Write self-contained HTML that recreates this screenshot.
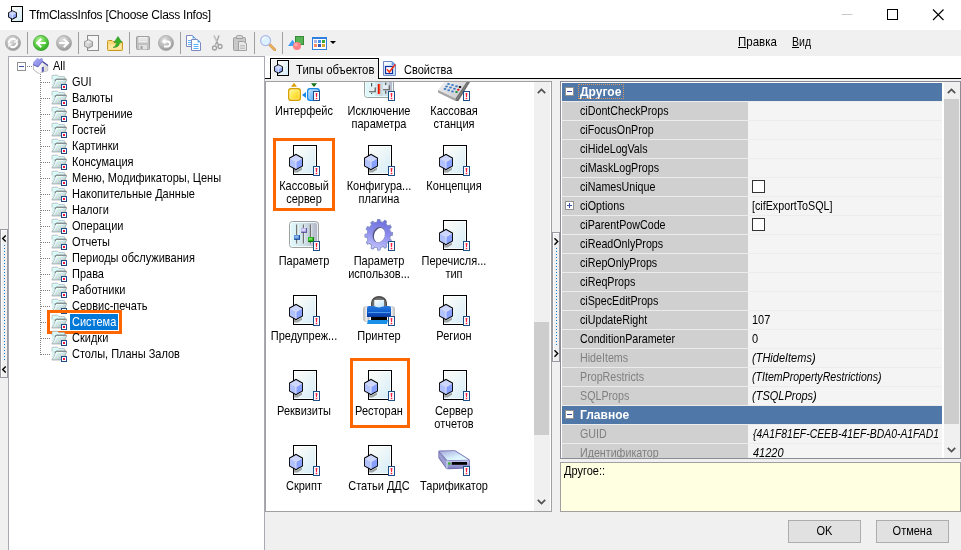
<!DOCTYPE html>
<html><head><meta charset="utf-8"><title>TfmClassInfos</title>
<style>
*{box-sizing:border-box;margin:0;padding:0}
html,body{width:961px;height:550px;overflow:hidden;background:#f0f0f0}
body{position:relative;font-family:"Liberation Sans",sans-serif;font-size:13px;color:#000;line-height:13px}
.a{position:absolute}
.t{position:absolute;white-space:nowrap;transform-origin:0 50%;transform:scaleX(.846)}
#title{left:0;top:0;width:961px;height:30px;background:#fff}
#tb{left:0;top:30px;width:961px;height:26px;background:#f0f0f0}
.sep{position:absolute;top:32px;width:1px;height:22px;background:#a0a0a0}
#tree{left:8px;top:56px;width:257px;height:496px;background:#fff;border:1px solid #aaaab2}
.tr{position:absolute;left:72px;height:13px;line-height:13px;white-space:nowrap;transform-origin:0 50%;transform:scaleX(.846)}
.vd{position:absolute;width:1px;background-image:linear-gradient(#808080 50%,transparent 50%);background-size:1px 2px}
.hd{position:absolute;height:1px;background-image:linear-gradient(90deg,#808080 50%,transparent 50%);background-size:2px 1px}
#tabs{left:265px;top:56px;width:696px;height:23px;background:#fff}
#list{left:265px;top:81px;width:287px;height:431px;background:#fff;border:1px solid #a0a0a0;overflow:hidden}
.li{position:absolute;width:90px;text-align:center;line-height:13px;white-space:nowrap;transform:scaleX(.846)}
.sel{position:absolute;border:3px solid #ff6600}
#pg{left:560px;top:81px;width:401px;height:378px;background:#ececec;border:1px solid #8c8c94;box-shadow:inset 1px 1px 0 #fff;overflow:hidden}
.ph{position:absolute;left:1px;width:380px;height:18px;background:#4f78a8;color:#fff;font-weight:bold}
.ph .pt{transform:scaleX(.925)}
.pn .pt{transform:scaleX(.822)}
.pn{position:absolute;left:1px;width:186px;height:18px;background:#d0d0d0}
.pv{position:absolute;left:187px;width:194px;height:18px;background:#f4f4f4}
.pt{position:absolute;top:2px;white-space:nowrap;line-height:13px;transform-origin:0 50%;transform:scaleX(.846)}
.cb{position:absolute;left:4px;top:2px;width:13px;height:13px;border:1px solid #333;background:#fff}
#desc{left:560px;top:462px;width:401px;height:50px;background:#ffffe1;border:1px solid #a0a0a0}
.btn{position:absolute;top:520px;width:73px;height:23px;background:#e1e1e1;border:1px solid #adadad;text-align:center;line-height:19px}
.btn span{display:inline-block;transform:scaleX(.846)}
#root{position:absolute;left:0;top:0;width:961px;height:550px;will-change:transform}
</style></head><body><div id="root">

<div id="title" class="a">
<svg class="a" style="left:8px;top:6px" width="16" height="16" viewBox="0 0 16 16"><use href="#i-doc16"/></svg>
<div class="t" style="left:29px;top:8px;font-size:12px;line-height:15px;letter-spacing:-0.26px;transform:none">TfmClassInfos [Choose Class Infos]</div>
<svg class="a" style="left:830px;top:0" width="131" height="30" viewBox="0 0 131 30"><path d="M11.5 14.5h11" stroke="#c8c8c8" stroke-width="1"/><rect x="57.5" y="9.5" width="10" height="10" fill="none" stroke="#000" stroke-width="1"/><path d="M103 9.500l10.500 10.500M113.500 9.500l-10.500 10.500" stroke="#000" stroke-width="1.100" fill="none"/></svg>
</div>
<div id="tb" class="a"></div>
<div class="sep" style="left:27px"></div>
<div class="sep" style="left:78px"></div>
<div class="sep" style="left:129px"></div>
<div class="sep" style="left:180px"></div>
<div class="sep" style="left:254px"></div>
<div class="sep" style="left:282px"></div>
<svg class="a" style="left:5px;top:35px" width="16" height="16" viewBox="0 0 16 16"><use href="#t-refresh"/></svg>
<svg class="a" style="left:33px;top:35px" width="16" height="16" viewBox="0 0 16 16"><use href="#t-back"/></svg>
<svg class="a" style="left:56px;top:35px" width="16" height="16" viewBox="0 0 16 16"><use href="#t-fwd"/></svg>
<svg class="a" style="left:84px;top:35px" width="16" height="16" viewBox="0 0 16 16"><use href="#t-docg"/></svg>
<svg class="a" style="left:107px;top:35px" width="16" height="16" viewBox="0 0 16 16"><use href="#t-folderup"/></svg>
<svg class="a" style="left:135px;top:35px" width="16" height="16" viewBox="0 0 16 16"><use href="#t-save"/></svg>
<svg class="a" style="left:158px;top:35px" width="16" height="16" viewBox="0 0 16 16"><use href="#t-undo"/></svg>
<svg class="a" style="left:186px;top:35px" width="16" height="16" viewBox="0 0 16 16"><use href="#t-copy"/></svg>
<svg class="a" style="left:209px;top:35px" width="16" height="16" viewBox="0 0 16 16"><use href="#t-cut"/></svg>
<svg class="a" style="left:232px;top:35px" width="16" height="16" viewBox="0 0 16 16"><use href="#t-paste"/></svg>
<svg class="a" style="left:260px;top:35px" width="16" height="16" viewBox="0 0 16 16"><use href="#t-search"/></svg>
<svg class="a" style="left:288px;top:35px" width="16" height="16" viewBox="0 0 16 16"><use href="#t-shapes"/></svg>
<svg class="a" style="left:311px;top:35px" width="16" height="16" viewBox="0 0 16 16"><use href="#t-grid"/></svg>
<svg class="a" style="left:330px;top:41px" width="6" height="3" viewBox="0 0 6 3"><path d="M0 0h6L3 3z" fill="#000"/></svg>
<div class="t" style="left:738px;top:35px;transform:scaleX(.885)"><u>П</u>равка</div>
<div class="t" style="left:792px;top:35px;transform:scaleX(.81)"><u>В</u>ид</div>
<div class="a" style="left:0px;top:229px;width:8px;height:149px;background:#f0f0f0;border:1px solid #9a9aa2;box-shadow:inset 1px 1px 0 #fff"></div>
<div class="a" style="left:4px;top:245px;width:1px;height:115px;background-image:linear-gradient(#0a7ad8 1px,transparent 1px);background-size:1px 3px"></div>
<svg class="a" style="left:1px;top:235px" width="6" height="8" viewBox="0 0 6 8"><path d="M4.700 .5L1.700 3.500 4.700 6.500" fill="none" stroke="#000" stroke-width="1.400"/></svg>
<svg class="a" style="left:1px;top:366px" width="6" height="8" viewBox="0 0 6 8"><path d="M4.700 .5L1.700 3.500 4.700 6.500" fill="none" stroke="#000" stroke-width="1.400"/></svg>
<div id="tree" class="a">
<div class="vd" style="left:31px;top:17px;height:281px"></div>
<div class="hd" style="left:18px;top:9px;width:6px"></div>
<svg class="a" style="left:8px;top:5px" width="9" height="9" viewBox="0 0 9 9"><rect x=".5" y=".5" width="8" height="8" fill="#fff" stroke="#919191"/><path d="M2 4.500h5" stroke="#3a4fa0"/></svg>
<svg class="a" style="left:24px;top:1px" width="16" height="16" viewBox="0 0 16 16"><use href="#i-home"/></svg>
<div class="tr" style="left:44px;top:2px">All</div>
<div class="hd" style="left:32px;top:25px;width:10px"></div>
<svg class="a" style="left:42px;top:17px" width="16" height="16" viewBox="0 0 16 16"><use href="#i-folder"/></svg>
<div class="tr" style="left:63px;top:18px">GUI</div>
<div class="hd" style="left:32px;top:41px;width:10px"></div>
<svg class="a" style="left:42px;top:33px" width="16" height="16" viewBox="0 0 16 16"><use href="#i-folder"/></svg>
<div class="tr" style="left:63px;top:34px">Валюты</div>
<div class="hd" style="left:32px;top:57px;width:10px"></div>
<svg class="a" style="left:42px;top:49px" width="16" height="16" viewBox="0 0 16 16"><use href="#i-folder"/></svg>
<div class="tr" style="left:63px;top:50px">Внутрениие</div>
<div class="hd" style="left:32px;top:73px;width:10px"></div>
<svg class="a" style="left:42px;top:65px" width="16" height="16" viewBox="0 0 16 16"><use href="#i-folder"/></svg>
<div class="tr" style="left:63px;top:66px">Гостей</div>
<div class="hd" style="left:32px;top:89px;width:10px"></div>
<svg class="a" style="left:42px;top:81px" width="16" height="16" viewBox="0 0 16 16"><use href="#i-folder"/></svg>
<div class="tr" style="left:63px;top:82px">Картинки</div>
<div class="hd" style="left:32px;top:105px;width:10px"></div>
<svg class="a" style="left:42px;top:97px" width="16" height="16" viewBox="0 0 16 16"><use href="#i-folder"/></svg>
<div class="tr" style="left:63px;top:98px">Консумация</div>
<div class="hd" style="left:32px;top:121px;width:10px"></div>
<svg class="a" style="left:42px;top:113px" width="16" height="16" viewBox="0 0 16 16"><use href="#i-folder"/></svg>
<div class="tr" style="left:63px;top:114px">Меню, Модификаторы, Цены</div>
<div class="hd" style="left:32px;top:137px;width:10px"></div>
<svg class="a" style="left:42px;top:129px" width="16" height="16" viewBox="0 0 16 16"><use href="#i-folder"/></svg>
<div class="tr" style="left:63px;top:130px">Накопительные Данные</div>
<div class="hd" style="left:32px;top:153px;width:10px"></div>
<svg class="a" style="left:42px;top:145px" width="16" height="16" viewBox="0 0 16 16"><use href="#i-folder"/></svg>
<div class="tr" style="left:63px;top:146px">Налоги</div>
<div class="hd" style="left:32px;top:169px;width:10px"></div>
<svg class="a" style="left:42px;top:161px" width="16" height="16" viewBox="0 0 16 16"><use href="#i-folder"/></svg>
<div class="tr" style="left:63px;top:162px">Операции</div>
<div class="hd" style="left:32px;top:185px;width:10px"></div>
<svg class="a" style="left:42px;top:177px" width="16" height="16" viewBox="0 0 16 16"><use href="#i-folder"/></svg>
<div class="tr" style="left:63px;top:178px">Отчеты</div>
<div class="hd" style="left:32px;top:201px;width:10px"></div>
<svg class="a" style="left:42px;top:193px" width="16" height="16" viewBox="0 0 16 16"><use href="#i-folder"/></svg>
<div class="tr" style="left:63px;top:194px">Периоды обслуживания</div>
<div class="hd" style="left:32px;top:217px;width:10px"></div>
<svg class="a" style="left:42px;top:209px" width="16" height="16" viewBox="0 0 16 16"><use href="#i-folder"/></svg>
<div class="tr" style="left:63px;top:210px">Права</div>
<div class="hd" style="left:32px;top:233px;width:10px"></div>
<svg class="a" style="left:42px;top:225px" width="16" height="16" viewBox="0 0 16 16"><use href="#i-folder"/></svg>
<div class="tr" style="left:63px;top:226px">Работники</div>
<div class="hd" style="left:32px;top:249px;width:10px"></div>
<svg class="a" style="left:42px;top:241px" width="16" height="16" viewBox="0 0 16 16"><use href="#i-folder"/></svg>
<div class="tr" style="left:63px;top:242px">Сервис-печать</div>
<div class="hd" style="left:32px;top:265px;width:10px"></div>
<svg class="a" style="left:42px;top:257px" width="16" height="16" viewBox="0 0 16 16"><use href="#i-folder"/></svg>
<div class="a" style="left:61px;top:257px;width:48px;height:16px;background:#0078d7"></div>
<div class="tr" style="left:63px;top:258px;color:#fff">Система</div>
<div class="sel" style="left:38px;top:253px;width:75px;height:24px"></div>
<div class="hd" style="left:32px;top:281px;width:10px"></div>
<svg class="a" style="left:42px;top:273px" width="16" height="16" viewBox="0 0 16 16"><use href="#i-folder"/></svg>
<div class="tr" style="left:63px;top:274px">Скидки</div>
<div class="hd" style="left:32px;top:297px;width:10px"></div>
<svg class="a" style="left:42px;top:289px" width="16" height="16" viewBox="0 0 16 16"><use href="#i-folder"/></svg>
<div class="tr" style="left:63px;top:290px">Столы, Планы Залов</div>
</div>
<div id="tabs" class="a"></div>
<div class="a" style="left:265px;top:78px;width:696px;height:1px;background:#000"></div>
<div class="a" style="left:270px;top:58px;width:109px;height:21px;background:#f0f0f0;border:1px solid #000;border-bottom:none;box-shadow:inset 1px 1px 0 #fff"></div>
<svg class="a" style="left:274px;top:60px" width="16" height="16" viewBox="0 0 16 16"><use href="#i-doc16"/></svg>
<div class="t" style="left:296px;top:63px;transform:scaleX(.871)">Типы объектов</div>
<svg class="a" style="left:383px;top:61px" width="16" height="16" viewBox="0 0 16 16"><use href="#i-props"/></svg>
<div class="t" style="left:404px;top:63px">Свойства</div>
<div id="list" class="a">
<svg class="a" style="left:22px;top:-13px" width="32" height="32" viewBox="0 0 32 32"><use href="#l-iface"/></svg>
<div class="li" style="left:-7px;top:22px">Интерфейс</div>
<svg class="a" style="left:97px;top:-13px" width="32" height="32" viewBox="0 0 32 32"><use href="#l-excl"/></svg>
<div class="li" style="left:68px;top:22px">Исключение<br>параметра</div>
<svg class="a" style="left:172px;top:-13px" width="32" height="32" viewBox="0 0 32 32"><use href="#l-kassa"/></svg>
<div class="li" style="left:143px;top:22px">Кассовая<br>станция</div>
<svg class="a" style="left:22px;top:62px" width="32" height="32" viewBox="0 0 32 32"><use href="#l-doc"/></svg>
<div class="li" style="left:-7px;top:97px">Кассовый<br>сервер</div>
<svg class="a" style="left:97px;top:62px" width="32" height="32" viewBox="0 0 32 32"><use href="#l-doc"/></svg>
<div class="li" style="left:68px;top:97px">Конфигура...<br>плагина</div>
<svg class="a" style="left:172px;top:62px" width="32" height="32" viewBox="0 0 32 32"><use href="#l-doc"/></svg>
<div class="li" style="left:143px;top:97px">Концепция</div>
<svg class="a" style="left:22px;top:137px" width="32" height="32" viewBox="0 0 32 32"><use href="#l-param"/></svg>
<div class="li" style="left:-7px;top:172px">Параметр</div>
<svg class="a" style="left:97px;top:137px" width="32" height="32" viewBox="0 0 32 32"><use href="#l-gear"/></svg>
<div class="li" style="left:68px;top:172px">Параметр<br>использов...</div>
<svg class="a" style="left:172px;top:137px" width="32" height="32" viewBox="0 0 32 32"><use href="#l-doc"/></svg>
<div class="li" style="left:143px;top:172px">Перечисля...<br>тип</div>
<svg class="a" style="left:22px;top:212px" width="32" height="32" viewBox="0 0 32 32"><use href="#l-doc"/></svg>
<div class="li" style="left:-7px;top:247px">Предупреж...</div>
<svg class="a" style="left:97px;top:212px" width="32" height="32" viewBox="0 0 32 32"><use href="#l-printer"/></svg>
<div class="li" style="left:68px;top:247px">Принтер</div>
<svg class="a" style="left:172px;top:212px" width="32" height="32" viewBox="0 0 32 32"><use href="#l-doc"/></svg>
<div class="li" style="left:143px;top:247px">Регион</div>
<svg class="a" style="left:22px;top:287px" width="32" height="32" viewBox="0 0 32 32"><use href="#l-doc"/></svg>
<div class="li" style="left:-7px;top:322px">Реквизиты</div>
<svg class="a" style="left:97px;top:287px" width="32" height="32" viewBox="0 0 32 32"><use href="#l-doc"/></svg>
<div class="li" style="left:68px;top:322px">Ресторан</div>
<svg class="a" style="left:172px;top:287px" width="32" height="32" viewBox="0 0 32 32"><use href="#l-doc"/></svg>
<div class="li" style="left:143px;top:322px">Сервер<br>отчетов</div>
<svg class="a" style="left:22px;top:362px" width="32" height="32" viewBox="0 0 32 32"><use href="#l-doc"/></svg>
<div class="li" style="left:-7px;top:397px">Скрипт</div>
<svg class="a" style="left:97px;top:362px" width="32" height="32" viewBox="0 0 32 32"><use href="#l-doc"/></svg>
<div class="li" style="left:68px;top:397px">Статьи ДДС</div>
<svg class="a" style="left:172px;top:362px" width="32" height="32" viewBox="0 0 32 32"><use href="#l-drive"/></svg>
<div class="li" style="left:143px;top:397px">Тарификатор</div>
<div class="sel" style="left:7px;top:56px;width:62px;height:73px"></div>
<div class="sel" style="left:84px;top:276px;width:60px;height:70px"></div>
<div class="a" style="left:268px;top:0px;width:16px;height:429px;background:#f0f0f0"></div>
<div class="a" style="left:268px;top:240px;width:15px;height:113px;background:#cdcdcd"></div>
<svg class="a" style="left:271px;top:6px" width="9" height="6" viewBox="0 0 9 6"><path d="M.8 5.200L4.500 1.500 8.200 5.200" fill="none" stroke="#505050" stroke-width="1.700"/></svg>
<svg class="a" style="left:271px;top:417px" width="9" height="6" viewBox="0 0 9 6"><path d="M.8 .8L4.500 4.500 8.200 .8" fill="none" stroke="#505050" stroke-width="1.700"/></svg>
</div>
<div class="a" style="left:552px;top:232px;width:8px;height:130px;background:#f0f0f0;border:1px solid #9a9aa2;box-shadow:inset 1px 1px 0 #fff"></div>
<div class="a" style="left:556px;top:248px;width:1px;height:97px;background-image:linear-gradient(#0a7ad8 1px,transparent 1px);background-size:1px 3px"></div>
<svg class="a" style="left:553px;top:238px" width="6" height="8" viewBox="0 0 6 8"><path d="M1.500 .3L4.700 3.500 1.500 6.700" fill="none" stroke="#000" stroke-width="1.400"/></svg>
<svg class="a" style="left:553px;top:350px" width="6" height="8" viewBox="0 0 6 8"><path d="M1.500 .3L4.700 3.500 1.500 6.700" fill="none" stroke="#000" stroke-width="1.400"/></svg>
<div id="pg" class="a">
<div class="ph" style="top:1px"><svg class="a" style="left:3px;top:4px" width="9" height="9" viewBox="0 0 9 9"><rect x=".5" y=".5" width="8" height="8" fill="#fff" stroke="#919191"/><path d="M2 4.500h5" stroke="#3a4fa0"/></svg><div class="pt" style="left:18px">Другое</div><div class="a" style="left:16px;top:1px;width:46px;height:15px;border:1px dotted #d89860"></div></div>
<div class="pn" style="top:20px"><div class="pt" style="left:18px;color:#000">ciDontCheckProps</div></div>
<div class="pv" style="top:20px"></div>
<div class="pn" style="top:39px"><div class="pt" style="left:18px;color:#000">ciFocusOnProp</div></div>
<div class="pv" style="top:39px"></div>
<div class="pn" style="top:58px"><div class="pt" style="left:18px;color:#000">ciHideLogVals</div></div>
<div class="pv" style="top:58px"></div>
<div class="pn" style="top:77px"><div class="pt" style="left:18px;color:#000">ciMaskLogProps</div></div>
<div class="pv" style="top:77px"></div>
<div class="pn" style="top:96px"><div class="pt" style="left:18px;color:#000">ciNamesUnique</div></div>
<div class="pv" style="top:96px"><div class="cb"></div></div>
<div class="pn" style="top:115px"><svg class="a" style="left:3px;top:4px" width="9" height="9" viewBox="0 0 9 9"><rect x=".5" y=".5" width="8" height="8" fill="#fff" stroke="#919191"/><path d="M2 4.500h5M4.500 2v5" stroke="#3a4fa0"/></svg><div class="pt" style="left:18px;color:#000">ciOptions</div></div>
<div class="pv" style="top:115px"><div class="pt" style="left:4px;transform:scaleX(.825);">[cifExportToSQL]</div></div>
<div class="pn" style="top:134px"><div class="pt" style="left:18px;color:#000">ciParentPowCode</div></div>
<div class="pv" style="top:134px"><div class="cb"></div></div>
<div class="pn" style="top:153px"><div class="pt" style="left:18px;color:#000">ciReadOnlyProps</div></div>
<div class="pv" style="top:153px"></div>
<div class="pn" style="top:172px"><div class="pt" style="left:18px;color:#000">ciRepOnlyProps</div></div>
<div class="pv" style="top:172px"></div>
<div class="pn" style="top:191px"><div class="pt" style="left:18px;color:#000">ciReqProps</div></div>
<div class="pv" style="top:191px"></div>
<div class="pn" style="top:210px"><div class="pt" style="left:18px;color:#000">ciSpecEditProps</div></div>
<div class="pv" style="top:210px"></div>
<div class="pn" style="top:229px"><div class="pt" style="left:18px;color:#000">ciUpdateRight</div></div>
<div class="pv" style="top:229px"><div class="pt" style="left:4px;">107</div></div>
<div class="pn" style="top:248px"><div class="pt" style="left:18px;color:#000">ConditionParameter</div></div>
<div class="pv" style="top:248px"><div class="pt" style="left:4px;">0</div></div>
<div class="pn" style="top:267px"><div class="pt" style="left:18px;color:#808080">HideItems</div></div>
<div class="pv" style="top:267px"><div class="pt" style="left:4px;font-style:italic;">(THideItems)</div></div>
<div class="pn" style="top:286px"><div class="pt" style="left:18px;color:#808080">PropRestricts</div></div>
<div class="pv" style="top:286px"><div class="pt" style="left:4px;font-style:italic;transform:scaleX(.815);">(TItemPropertyRestrictions)</div></div>
<div class="pn" style="top:305px"><div class="pt" style="left:18px;color:#808080">SQLProps</div></div>
<div class="pv" style="top:305px"><div class="pt" style="left:4px;font-style:italic;">(TSQLProps)</div></div>
<div class="ph" style="top:324px"><svg class="a" style="left:3px;top:4px" width="9" height="9" viewBox="0 0 9 9"><rect x=".5" y=".5" width="8" height="8" fill="#fff" stroke="#919191"/><path d="M2 4.500h5" stroke="#3a4fa0"/></svg><div class="pt" style="left:18px">Главное</div></div>
<div class="pn" style="top:343px"><div class="pt" style="left:18px;color:#808080">GUID</div></div>
<div class="pv" style="top:343px"><div class="pt" style="left:5px;font-style:italic;transform:scaleX(.8)">{4A1F81EF-CEEB-41EF-BDA0-A1FAD1</div></div>
<div class="pn" style="top:362px"><div class="pt" style="left:18px;color:#808080">Идентификатор</div></div>
<div class="pv" style="top:362px"><div class="pt" style="left:5px;font-style:italic;transform:scaleX(.846)">41220</div></div>
<div class="a" style="left:381px;top:0;width:2px;height:376px;background:#fff"></div>
<div class="a" style="left:383px;top:0;width:16px;height:376px;background:#f0f0f0"></div>
<div class="a" style="left:383px;top:17px;width:15px;height:325px;background:#cdcdcd"></div>
<svg class="a" style="left:386px;top:6px" width="9" height="6" viewBox="0 0 9 6"><path d="M.8 5.200L4.500 1.500 8.200 5.200" fill="none" stroke="#505050" stroke-width="1.700"/></svg>
<svg class="a" style="left:386px;top:365px" width="9" height="6" viewBox="0 0 9 6"><path d="M.8 .8L4.500 4.500 8.200 .8" fill="none" stroke="#505050" stroke-width="1.700"/></svg>
</div>
<div id="desc" class="a"><div class="t" style="left:3px;top:1px">Другое::</div></div>
<div class="btn" style="left:788px"><span>OK</span></div>
<div class="btn" style="left:876px"><span>Отмена</span></div>
</div>
<svg width="0" height="0" style="position:absolute">
<defs>
<linearGradient id="g-doc" x1="0" y1="0" x2="1" y2="1"><stop offset="0" stop-color="#fdfdf8"/><stop offset=".35" stop-color="#f1f8f8"/><stop offset="1" stop-color="#d3ebf8"/></linearGradient>
<linearGradient id="g-yel" x1="0" y1="0" x2="1" y2="1"><stop offset="0" stop-color="#fff8a0"/><stop offset=".45" stop-color="#ffe850"/><stop offset="1" stop-color="#ffc800"/></linearGradient>
<linearGradient id="g-blu" x1="0" y1="0" x2="1" y2="1"><stop offset="0" stop-color="#c8e4ff"/><stop offset=".5" stop-color="#80c0ff"/><stop offset="1" stop-color="#2090f8"/></linearGradient>
<linearGradient id="g-pan" x1="0" y1="0" x2="1" y2="0"><stop offset="0" stop-color="#e4fbfd"/><stop offset=".45" stop-color="#d0e4ea"/><stop offset="1" stop-color="#b4b4c6"/></linearGradient>
<linearGradient id="g-gear" x1="0" y1="0" x2="0" y2="1"><stop offset="0" stop-color="#6c6cdc"/><stop offset=".5" stop-color="#9090f0"/><stop offset="1" stop-color="#c4c4fa"/></linearGradient>
<linearGradient id="g-pbody" x1="0" y1="0" x2="0" y2="1"><stop offset="0" stop-color="#2878e0"/><stop offset=".5" stop-color="#1060d0"/><stop offset="1" stop-color="#0838a0"/></linearGradient>
<linearGradient id="g-silver" x1="0" y1="0" x2="1" y2="0"><stop offset="0" stop-color="#b0b0b0"/><stop offset=".5" stop-color="#f0f0f0"/><stop offset="1" stop-color="#b8b8b8"/></linearGradient>
<linearGradient id="g-paper" x1="0" y1="0" x2="1" y2="1"><stop offset="0" stop-color="#ffffff"/><stop offset="1" stop-color="#b8e0f8"/></linearGradient>
<linearGradient id="g-drvtop" x1="0" y1="0" x2="1" y2="1"><stop offset="0" stop-color="#a4a8dc"/><stop offset=".6" stop-color="#d8f0fc"/><stop offset="1" stop-color="#e8ffff"/></linearGradient>
<linearGradient id="g-drvfr" x1="0" y1="0" x2="0" y2="1"><stop offset="0" stop-color="#c8c8f0"/><stop offset="1" stop-color="#7c7cc0"/></linearGradient>
<radialGradient id="g-green" cx=".4" cy=".3" r=".75"><stop offset="0" stop-color="#b4f498"/><stop offset=".55" stop-color="#5ccc44"/><stop offset="1" stop-color="#2ca820"/></radialGradient>
<radialGradient id="g-grey" cx=".4" cy=".3" r=".7"><stop offset="0" stop-color="#e0e0e0"/><stop offset=".6" stop-color="#b8b8b8"/><stop offset="1" stop-color="#989898"/></radialGradient>
<linearGradient id="g-wall" x1="0" y1="0" x2="1" y2="0"><stop offset="0" stop-color="#ffffff"/><stop offset="1" stop-color="#d4d4d4"/></linearGradient>
<linearGradient id="g-roof" x1="0" y1="0" x2="1" y2="1"><stop offset="0" stop-color="#b0b0f8"/><stop offset="1" stop-color="#7c7cdc"/></linearGradient>
<linearGradient id="g-fold" x1="0" y1="0" x2="1" y2="1"><stop offset="0" stop-color="#e8ffff"/><stop offset=".5" stop-color="#d0e4e4"/><stop offset="1" stop-color="#a4acac"/></linearGradient>
<linearGradient id="g-kassa" x1="0" y1="0" x2="1" y2="1"><stop offset="0" stop-color="#f4f4f4"/><stop offset="1" stop-color="#c4c4cc"/></linearGradient>

<!-- badge 7x10 -->
<g id="badge"><rect x=".5" y=".5" width="6" height="9" fill="#fff" stroke="#1c4e88"/><path d="M2.600 2h1.800l-.4 4h-1z" fill="#ff2040"/><rect x="2.700" y="6.800" width="1.600" height="1.400" fill="#ff2040"/></g>

<!-- cube 14x16 -->
<g id="cube"><path d="M7-.2L14 3.700v8.600L7 16.200 0 12.300V3.700z" fill="#000"/><path d="M7 .9L13.100 4.400 7 7.900.9 4.400z" fill="#ccd6ff"/><path d="M.9 4.400L7 7.900v7.200L.9 11.800z" fill="#b2c2ff"/><path d="M13.100 4.400L7 7.900v7.200l6.100-3.300z" fill="#88a0ff"/><path d="M7 7.900v7M7 7.900L1.300 4.600M7 7.900l5.700-3.300" stroke="#e8ecff" stroke-width=".8" fill="none"/></g>

<!-- list doc icon 32x32 -->
<symbol id="l-doc" viewBox="0 0 32 32"><rect x="5.500" y="1.500" width="23" height="29" fill="url(#g-doc)" stroke="#000"/><rect x="6.500" y="2.500" width="21" height="27" fill="none" stroke="#fff" stroke-opacity=".8"/><path d="M6 25L8.500 26.500 14 23.500V25.800L9.500 28.600H6z" fill="#606060" fill-opacity=".55"/><use href="#cube" x="1" y="10"/><use href="#badge" x="25" y="22"/></symbol>

<!-- 16px doc icon -->
<symbol id="i-doc16" viewBox="0 0 16 16"><rect x="3.500" y=".5" width="11" height="15" fill="url(#g-doc)" stroke="#000"/><path d="M4.500 4.200L8.900 6.600v4.700L4.500 13.700.1 11.300V6.600z" fill="#000"/><path d="M4.500 5.300L7.900 7.100v3.700L4.500 12.600 1.100 10.800V7.100z" fill="#92aaff"/><path d="M4.500 5.300L7.900 7.100 4.500 8.900 1.100 7.100z" fill="#ccd8ff"/><path d="M1.100 7.100L4.500 8.900v3.700L1.100 10.800z" fill="#b0c0ff"/><path d="M4.500 8.900v3.500M4.500 8.900L1.300 7.200M4.500 8.900L7.700 7.200" stroke="#e4eaff" stroke-width=".7" fill="none"/></symbol>

<!-- iface icon -->
<symbol id="l-iface" viewBox="0 0 32 32"><path d="M3 17.700h6L6 13.800z" fill="#d8a000"/><rect x=".7" y="19.700" width="11.600" height="11.600" rx="2.200" fill="url(#g-yel)" stroke="#d8a000" stroke-width="1.400"/><rect x="1.900" y="20.900" width="9.200" height="9.200" rx="1.300" fill="none" stroke="#fffcc0" stroke-width=".7" stroke-opacity=".8"/><path d="M18 23v6l-4-3z" fill="#1888e8"/><rect x="19.700" y="19.700" width="11.600" height="11.600" rx="2.200" fill="url(#g-blu)" stroke="#1888e8" stroke-width="1.400"/><rect x="20.900" y="20.900" width="9.200" height="9.200" rx="1.300" fill="none" stroke="#d8f0ff" stroke-width=".7" stroke-opacity=".8"/><path d="M23 14.200h6L26 18z" fill="#107010"/><use href="#badge" x="25" y="22"/></symbol>

<!-- excl icon -->
<symbol id="l-excl" viewBox="0 0 32 32"><rect x="1.500" y="2.500" width="29" height="26" rx="3" fill="url(#g-pan)" stroke="#a0a0a0"/><rect x="2.500" y="3.500" width="27" height="24" rx="2" fill="none" stroke="#e8ffff" stroke-opacity=".9"/><rect x="5.500" y="4" width="6.500" height="23" fill="#e4ffff" fill-opacity=".6"/><rect x="19.500" y="4" width="6.500" height="23" fill="#e4ffff" fill-opacity=".45"/><path d="M8.600 5v3M8.600 9.500v3M8.600 14v3.500M8.600 23.800v1.200M22.700 5v3M22.700 9.500v2.500M22.700 13.500v2.500M22.700 21.800v3" stroke="#585858" stroke-width="1.200"/><rect x="6" y="18.200" width="6" height="4.400" fill="#e4eef2"/><path d="M6 22.800h6.200v-4.400" fill="none" stroke="#505050" stroke-width="1.100"/><rect x="20" y="16.200" width="6" height="4.200" fill="#e4eef2"/><path d="M20 20.700h6.200v-4.400" fill="none" stroke="#505050" stroke-width="1.100"/><rect x="14.800" y="15" width="2.300" height="10" fill="#e81000"/><rect x="16.300" y="15" width=".8" height="10" fill="#ff7038"/><use href="#badge" x="25" y="22"/></symbol>

<!-- kassa icon -->
<symbol id="l-kassa" viewBox="0 0 32 32"><path d="M0 21L6 13H28.500L17.500 29.500z" fill="url(#g-kassa)"/><path d="M0 21v2.600L17.500 32v-2.500z" fill="#a4a4a4"/><path d="M28.500 13H32L20.500 32H17.500v-2.500z" fill="#6c6c6c"/><path d="M29.500 13.500L18.500 31" stroke="#8c8c8c" stroke-width=".8"/><g fill="#3c7cc4"><ellipse cx="10.500" cy="15" rx="1.400" ry="1"/><ellipse cx="14.500" cy="16" rx="1.400" ry="1"/><ellipse cx="18.500" cy="17.200" rx="1.400" ry="1"/><ellipse cx="8.500" cy="17.500" rx="1.400" ry="1"/><ellipse cx="12.500" cy="18.600" rx="1.400" ry="1"/><ellipse cx="16.500" cy="19.800" rx="1.400" ry="1"/><ellipse cx="7" cy="20" rx="1.400" ry="1"/><ellipse cx="10.700" cy="21.200" rx="1.400" ry="1"/><ellipse cx="14.500" cy="22.400" rx="1.400" ry="1"/></g><ellipse cx="22" cy="18" rx="1.300" ry="1.100" fill="#000"/><ellipse cx="20.300" cy="20.700" rx="1.300" ry="1" fill="#e81010"/><ellipse cx="18.500" cy="23" rx="1.300" ry="1" fill="#109030"/><use href="#badge" x="25" y="22"/></symbol>

<!-- param icon -->
<symbol id="l-param" viewBox="0 0 32 32"><rect x="1.500" y="2.500" width="29" height="26" rx="3" fill="url(#g-pan)" stroke="#a0a0a0"/><rect x="2.500" y="3.500" width="27" height="24" rx="2" fill="none" stroke="#f4ffff" stroke-opacity=".8"/><path d="M8.700 5.500v19M15.500 5.500v19M22.500 5.500v19" stroke="#707070" stroke-width="1.300"/><path d="M9.900 5.500v19M16.700 5.500v19M23.700 5.500v19" stroke="#fff" stroke-width=".8" stroke-opacity=".8"/><rect x="6" y="16" width="6" height="4.800" fill="#10408c"/><rect x="6" y="16" width="5.200" height="3.800" fill="#5c98e0"/><rect x="7" y="17" width="3" height="1.800" fill="#8cb8f0"/><rect x="13" y="9" width="6" height="4.800" fill="#4c4490"/><rect x="13" y="9" width="5.200" height="3.800" fill="#c0b8f0"/><rect x="14" y="10" width="3" height="1.800" fill="#dcd8fc"/><rect x="20" y="18" width="6" height="5" fill="#0c7008"/><rect x="20" y="18" width="5.200" height="4" fill="#30bc20"/><rect x="21" y="19" width="3" height="1.800" fill="#78e060"/><use href="#badge" x="25" y="22"/></symbol>

<!-- gear icon -->
<symbol id="l-gear" viewBox="0 0 32 32"><clipPath id="hc"><ellipse cx="0" cy="0" rx="6.600" ry="7.400"/></clipPath><g transform="translate(15.800 15.700) rotate(14) scale(.92 1.040)"><path fill="url(#g-gear)" stroke="#8090c0" stroke-width=".9" stroke-linejoin="round" fill-rule="evenodd" d="M12.60 0.00 L12.54 1.19 L14.82 2.35 L14.22 4.78 L11.67 4.76 L10.91 6.30 L10.27 7.30 L11.66 9.44 L9.92 11.25 L7.72 9.96 L6.30 10.91 L5.25 11.46 L5.38 14.00 L2.96 14.70 L1.71 12.48 L0.00 12.60 L-1.19 12.54 L-2.35 14.82 L-4.78 14.22 L-4.76 11.67 L-6.30 10.91 L-7.30 10.27 L-9.44 11.66 L-11.25 9.92 L-9.96 7.72 L-10.91 6.30 L-11.46 5.25 L-14.00 5.38 L-14.70 2.96 L-12.48 1.71 L-12.60 0.00 L-12.54 -1.19 L-14.82 -2.35 L-14.22 -4.78 L-11.67 -4.76 L-10.91 -6.30 L-10.27 -7.30 L-11.66 -9.44 L-9.92 -11.25 L-7.72 -9.96 L-6.30 -10.91 L-5.25 -11.46 L-5.38 -14.00 L-2.96 -14.70 L-1.71 -12.48 L-0.00 -12.60 L1.19 -12.54 L2.35 -14.82 L4.78 -14.22 L4.76 -11.67 L6.30 -10.91 L7.30 -10.27 L9.44 -11.66 L11.25 -9.92 L9.96 -7.72 L10.91 -6.30 L11.46 -5.25 L14.00 -5.38 L14.70 -2.96 L12.48 -1.71zM0 -7.400A6.600 7.400 0 1 0 .01 -7.400z"/><g clip-path="url(#hc)"><rect x="-8" y="-8" width="16" height="16" fill="#545488"/><ellipse cx="1.500" cy=".6" rx="6.400" ry="7.300" fill="#fff"/></g></g><use href="#badge" x="25" y="22"/></symbol>

<!-- printer icon -->
<symbol id="l-printer" viewBox="0 0 32 32"><path d="M8 13V9a8 7 0 0 1 16 0v4z" fill="#484848"/><path d="M9 13V9.500a7 6 0 0 1 14 0V13z" fill="#707070"/><rect x="11.300" y="6" width="9.700" height="8" fill="url(#g-paper)"/><rect x=".3" y="12.500" width="6" height="15" rx="2.800" fill="url(#g-silver)" stroke="#b4b4b4" stroke-width=".5"/><rect x="25.700" y="12.500" width="6" height="15" rx="2.800" fill="url(#g-silver)" stroke="#b4b4b4" stroke-width=".5"/><path d="M4 14a2 2 0 0 1 2-2h4l6 1.500 6-1.500h4a2 2 0 0 1 2 2v9H4z" fill="url(#g-pbody)"/><path d="M5 18.500h22" stroke="#60a8f8" stroke-width=".8"/><rect x="8" y="23" width="16" height="3" fill="#000"/><path d="M5 26h20l-1 4H4z" fill="#1890e8"/><use href="#badge" x="25" y="22"/></symbol>

<!-- drive icon -->
<symbol id="l-drive" viewBox="0 0 32 32"><path d="M.4 7.600Q.4 6.600 1.500 6.500L16.500 6.300Q17.500 6.300 18.300 7L31.200 15.300Q31.800 15.800 31.800 16.500V23.500Q31.800 24.300 31 24.400L9.500 25.300Q8.500 25.300 8 24.500L.8 14.500Q.4 14 .4 13z" fill="#6c6cb0"/><path d="M1.200 7.500L16.800 7 30.500 15.700 9.300 16.200z" fill="url(#g-drvtop)"/><path d="M1.200 8.500L8.600 16.800V24L1.200 13.500z" fill="#9c9cd0"/><path d="M9.400 16.800L31 16.300V23.600L9.400 24.500z" fill="url(#g-drvfr)"/><path d="M9 16.500v8" stroke="#e0f8ff" stroke-width="1"/><rect x="13.800" y="18" width="15.200" height="2.800" fill="#000"/><circle cx="11.400" cy="19.600" r="1.300" fill="#30b020"/><use href="#badge" x="25" y="22"/></symbol>

<!-- home icon 16 -->
<symbol id="i-home" viewBox="0 0 16 16"><path d="M.3 6.500V11.300L5.300 15.300 14.700 12.600V7.500L9.800 4z" fill="#fff" stroke="#8c8c8c" stroke-width=".7"/><path d="M5.300 9.500L9.800 4.300 14.700 7.800V12.600L5.300 15.300z" fill="url(#g-wall)"/><path d="M0 4.500L4 .3H5.500L6.300 1.200 7.500 .2H9.200L9.800 1.200V3.300L5 9.200 0 7z" fill="url(#g-roof)"/><path d="M0 6.300V7L5 9.300 9.800 3.500V2.700L5 8.500z" fill="#5454b4"/><path d="M9.800 3L15 6.700V8.300L9.500 4.400z" fill="#4848a4"/><path d="M8.800 9.300l2.100-.8v5.100l-2.100.6z" fill="#5c5cb4"/></symbol>

<!-- folder icon 16 with badge -->
<symbol id="i-folder" viewBox="0 0 16 16"><path d="M1 2.300Q1 1.200 2 1.200H6.500L7.800 2.600H13Q13.800 2.600 13.800 3.400V5.500H1z" fill="#dcfafa" stroke="#a4acac" stroke-width=".7"/><path d="M1 5V13L4.500 5.500z" fill="#d8f4f4"/><path d="M.8 14Q3.800 10 4.300 6.300 4.500 5.200 5.600 5.200H15Q16 5.200 15.600 6.200L12.800 13Q12.500 14 11.500 14z" fill="url(#g-fold)" stroke="#8c9494" stroke-width=".6"/><path d="M4.100 7Q4.400 5.200 5.600 5.200H15.400" stroke="#6c7474" stroke-width=".9" fill="none"/><path d="M2.800 12.500Q5.300 9 5.700 6.600H12" stroke="#f4ffff" stroke-width=".8" fill="none"/><rect x="10.500" y="10.500" width="5" height="5" fill="#fff" stroke="#1c4e88"/><rect x="12" y="12" width="2" height="2" fill="#ff1040"/></symbol>

<!-- props icon -->
<symbol id="i-props" viewBox="0 0 16 16"><path d="M.5.500H9L12.500 4V14.500H.5z" fill="url(#g-paper)" stroke="#7088c8"/><path d="M9 .5V4h3.500z" fill="#60b0f8" stroke="#7088c8" stroke-width=".6"/><rect x="2.500" y="5.500" width="7" height="7" fill="#fff" stroke="#1030a0" stroke-width="1.200"/><path d="M3.800 8.300L6.300 11 12.300 3.500" fill="none" stroke="#ff3010" stroke-width="1.500"/></symbol>

<!-- toolbar icons -->
<symbol id="t-refresh" viewBox="0 0 16 16"><circle cx="8" cy="8" r="7.600" fill="url(#g-grey)" stroke="#a0a0a0" stroke-width=".6"/><path d="M3.900 8.300A4.100 4.100 0 0 1 10.600 4.800" fill="none" stroke="#fff" stroke-width="1.900"/><path d="M12.700 3.400V7.600H8.500z" fill="#fff"/><path d="M12.100 7.700A4.100 4.100 0 0 1 5.400 11.200" fill="none" stroke="#fff" stroke-width="1.900"/><path d="M3.300 12.600V8.400H7.500z" fill="#fff"/></symbol>
<symbol id="t-back" viewBox="0 0 16 16"><circle cx="8" cy="8" r="7.600" fill="url(#g-green)" stroke="#289820" stroke-width=".7"/><path d="M12.800 8H4.500M8.300 3.800L4 8l4.300 4.200" fill="none" stroke="#fff" stroke-width="2"/></symbol>
<symbol id="t-fwd" viewBox="0 0 16 16"><circle cx="8" cy="8" r="7.600" fill="url(#g-grey)" stroke="#a0a0a0" stroke-width=".6"/><path d="M3.200 8H11.500M7.700 3.800L12 8 7.700 12.200" fill="none" stroke="#fff" stroke-width="2"/></symbol>
<symbol id="t-docg" viewBox="0 0 16 16"><rect x="3.500" y=".5" width="11" height="15" fill="#f6f6f6" stroke="#8c8c8c"/><path d="M4.500 4.200L8.900 6.600v4.700L4.500 13.700.1 11.300V6.600z" fill="#909090"/><path d="M4.500 5.300L7.900 7.100v3.700L4.500 12.600 1.100 10.800V7.100z" fill="#c8c8c8"/><path d="M4.500 5.300L7.900 7.100 4.500 8.900 1.100 7.100z" fill="#e8e8e8"/><path d="M1.100 7.100L4.500 8.900v3.700L1.100 10.800z" fill="#d8d8d8"/></symbol>
<symbol id="t-folderup" viewBox="0 0 16 16"><path d="M.5 6.500Q.5 5.500 1.500 5.500H5L6 6.500H14.500Q15.500 6.500 15.500 7.500V14.500Q15.500 15.500 14.500 15.500H1.500Q.5 15.500 .5 14.500z" fill="#f8d878" stroke="#c89820"/><path d="M1.500 9.500H14.500V14.500H1.500z" fill="#fce8a0"/><path d="M6 12.500Q9 12 9.500 7.500H7L11 1.500 15 7.500H12.500Q12.500 12.500 6 12.500z" fill="#38b028" stroke="#208818" stroke-width=".5"/></symbol>
<symbol id="t-save" viewBox="0 0 16 16"><path d="M1.500 2.500Q1.500 1.500 2.500 1.500H13.500Q14.500 1.500 14.500 2.500V13.500Q14.500 14.500 13.500 14.500H2.500Q1.500 14.500 1.500 13.500z" fill="#c0c0c0" stroke="#a0a0a0"/><rect x="3.500" y="2" width="9" height="5.500" fill="#f0f0f0"/><path d="M4.500 4h7M4.500 5.500h7" stroke="#d0d0d0" stroke-width=".6"/><rect x="4" y="10" width="8" height="4.500" fill="#e0e0e0"/><rect x="5.500" y="11" width="2" height="3" fill="#a0a0a0"/></symbol>
<symbol id="t-undo" viewBox="0 0 16 16"><circle cx="8" cy="8" r="7.600" fill="url(#g-grey)" stroke="#a0a0a0" stroke-width=".6"/><path d="M7 6.500H9.500A2.500 2.500 0 0 1 9.500 11.500H6" fill="none" stroke="#fff" stroke-width="1.800"/><path d="M3.500 6.500L7.500 3.500v6z" fill="#fff"/></symbol>
<symbol id="t-copy" viewBox="0 0 16 16"><path d="M.5.500H6.500L9.500 3.500V11.500H.5z" fill="#fff" stroke="#8088c0"/><path d="M6.500.5V3.500H9.500z" fill="#58b0f8"/><path d="M2 5.500h4M2 7.500h3M2 9.500h3" stroke="#58b0f8" stroke-width="1"/><path d="M5.500 4.500H11.500L14.500 7.500V15.500H5.500z" fill="#fff" stroke="#8088c0"/><path d="M11.500 4.500V7.500H14.500z" fill="#58b0f8"/><path d="M7.500 9.500h5M7.500 11.500h5M7.500 13.500h5" stroke="#58b0f8" stroke-width="1"/></symbol>
<symbol id="t-cut" viewBox="0 0 16 16"><path d="M5 0.500L9.500 10M10 0.500L6.500 10" stroke="#a0a0a0" stroke-width="1.300" fill="none"/><path d="M5 .5L8 7" stroke="#e0e0e0" stroke-width=".6"/><circle cx="5.500" cy="13" r="2" fill="#f0f0f0" stroke="#a0a0a0" stroke-width="1.300"/><circle cx="11" cy="11.500" r="2" fill="#f0f0f0" stroke="#a0a0a0" stroke-width="1.300"/></symbol>
<symbol id="t-paste" viewBox="0 0 16 16"><rect x="1.500" y="2.500" width="12" height="13" rx="1" fill="#c8c8c8" stroke="#a0a0a0"/><path d="M4.500 3.500V1.500Q4.500.5 5.500.5H9.500Q10.500.5 10.500 1.500V3.500z" fill="#d8d8d8" stroke="#a0a0a0"/><path d="M6.500 6.500H11.500L14.500 8.500V15.500H6.500z" fill="#e8e8e8" stroke="#a0a0a0"/><path d="M8 10.500h5M8 12h5M8 13.500h5" stroke="#b8b8b8" stroke-width=".8"/></symbol>
<symbol id="t-search" viewBox="0 0 16 16"><path d="M9.500 9.500L15 15" stroke="#c88838" stroke-width="2.800" stroke-linecap="round"/><path d="M9.500 9.500L15 15" stroke="#f0b868" stroke-width="1.600" stroke-linecap="round"/><circle cx="5.600" cy="5.600" r="5" fill="#dcf2ff" stroke="#b0b8e8" stroke-width="1.200"/><path d="M2.500 5A3.200 3.200 0 0 1 5.500 2.300" stroke="#fff" stroke-width="1.200" fill="none"/></symbol>
<symbol id="t-shapes" viewBox="0 0 16 16"><rect x="7.500" y="1.500" width="8" height="8" fill="#54b454" stroke="#388838"/><path d="M0 11L4.500 4.800 9 11z" fill="#409ff8"/><circle cx="9" cy="11" r="4" fill="#ff8088"/><circle cx="8" cy="9.800" r="1.800" fill="#ffa8a8"/></symbol>
<symbol id="t-grid" viewBox="0 0 16 16"><rect x="1.500" y="2.500" width="14" height="12" fill="#fff" stroke="#3080e0"/><rect x="1" y="2" width="15" height="2" fill="#3080e0"/><rect x="3" y="5" width="3" height="3" fill="#b0b0e0"/><rect x="7" y="5" width="3" height="3" fill="#3890f0"/><rect x="11" y="5" width="3" height="3" fill="#38a838"/><rect x="3" y="9" width="3" height="3" fill="#ff8858"/><rect x="7" y="9" width="3" height="3" fill="#3858b8"/><rect x="11" y="9" width="3" height="3" fill="#d8a830"/></symbol>
</defs></svg>

</body></html>
